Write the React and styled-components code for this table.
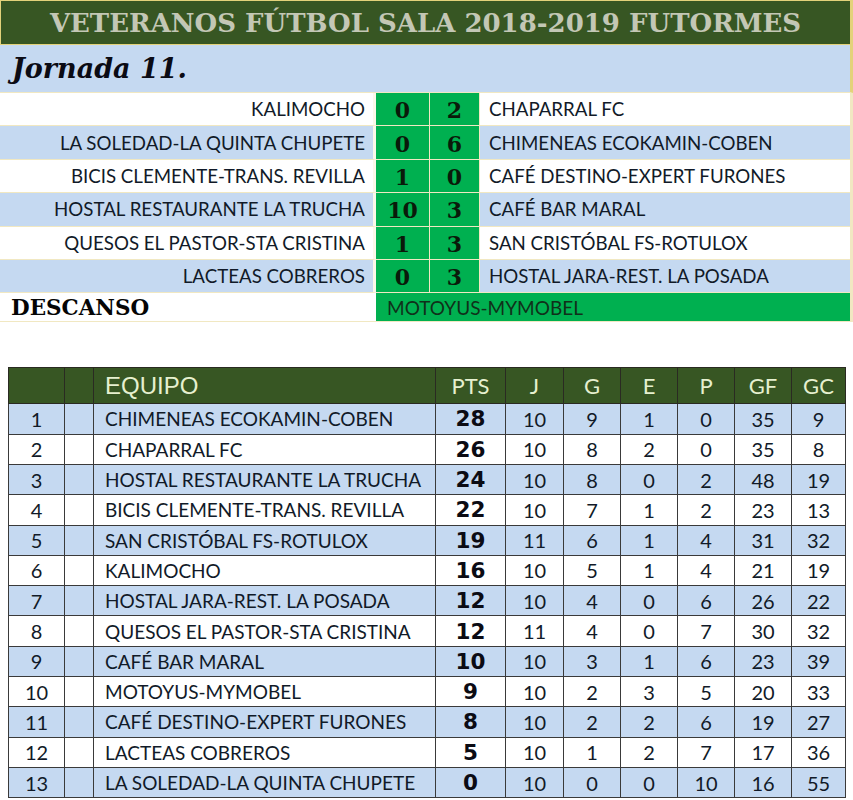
import React from "react";
import styled, { createGlobalStyle } from "styled-components";

const Global = createGlobalStyle`
  html, body { margin: 0; padding: 0; background: #ffffff; }
  body { font-family: Lato, "Liberation Sans", sans-serif; }
`;

const GREEN_DARK = "#375623";
const BLUE = "#c5d9f1";
const SCORE_GREEN = "#00b050";
const LINE = "#f1e8c2";
const INK = "#111a28";

const Page = styled.div`
  width: 853px;
  height: 800px;
  overflow: hidden;
  display: flex;
  flex-direction: column;
`;

const TitleBar = styled.div`
  height: 45px;
  box-sizing: border-box;
  background: ${GREEN_DARK};
  border: 1px solid #e3d27a;
  border-right-width: 3px;
  display: flex;
  align-items: center;
  justify-content: center;
  font-family: "DejaVu Serif", "Liberation Serif", serif;
  font-weight: 700;
  font-size: 26px;
  color: #c3c7b5;
`;

const JornadaBar = styled.div`
  height: 48px;
  box-sizing: border-box;
  background: ${BLUE};
  border-right: 3px solid #e3d27a;
  border-bottom: 1px solid ${LINE};
  display: flex;
  align-items: center;
  padding-left: 12px;
  font-family: "DejaVu Serif", "Liberation Serif", serif;
  font-weight: 700;
  font-style: italic;
  font-size: 27px;
  color: #0b0b14;
`;

const MatchGrid = styled.div`
  display: grid;
  grid-template-columns: 376px 54px 50px 1fr;
  grid-auto-rows: 33.4px;
`;

const TeamCell = styled.div`
  box-sizing: border-box;
  background: ${(p) => (p.$alt ? BLUE : "#ffffff")};
  border-bottom: 1px solid ${LINE};
  border-right: ${(p) => (p.$side === "left" ? `3px solid #fbf8ea` : `3px solid ${LINE}`)};
  display: flex;
  align-items: center;
  justify-content: ${(p) => (p.$side === "left" ? "flex-end" : "flex-start")};
  padding: ${(p) => (p.$side === "left" ? "0 8px 0 0" : "0 0 0 9px")};
  font-size: 18.7px;
  color: ${INK};
  white-space: nowrap;
`;

const ScoreCell = styled.div`
  box-sizing: border-box;
  background: ${SCORE_GREEN};
  border-bottom: 1px solid ${LINE};
  border-right: 1px solid ${LINE};
  display: flex;
  align-items: center;
  justify-content: center;
  font-family: "DejaVu Serif", "Liberation Serif", serif;
  font-weight: 700;
  font-size: 22px;
  color: #0a1a0a;
  padding-top: 2px;
`;

const RestRow = styled.div`
  display: grid;
  grid-template-columns: 376px 1fr;
  height: 29px;
`;

const RestLabel = styled.div`
  box-sizing: border-box;
  background: #ffffff;
  border-bottom: 1px solid ${LINE};
  display: flex;
  align-items: center;
  padding-left: 11px;
  font-family: "DejaVu Serif", "Liberation Serif", serif;
  font-weight: 700;
  font-size: 21.5px;
  color: #050505;
`;

const RestTeam = styled.div`
  box-sizing: border-box;
  background: ${SCORE_GREEN};
  border-bottom: 1px solid ${LINE};
  border-right: 3px solid ${LINE};
  display: flex;
  align-items: center;
  padding-left: 11px;
  font-size: 19px;
  color: #10301a;
`;

const TableWrap = styled.div`
  padding: 45px 0 0 8px;
`;

const Table = styled.table`
  border-collapse: collapse;
  table-layout: fixed;
  width: 837px;
  color: ${INK};
`;

const HeadRow = styled.tr`
  height: 36px;
  background: ${GREEN_DARK};
`;

const Th = styled.th`
  border: 1px solid #2a2a22;
  padding: 0;
  font-weight: 400;
  color: #e6f0cf;
  text-align: ${(p) => (p.$left ? "left" : "center")};
  padding-left: ${(p) => (p.$left ? "11px" : "0")};
  font-family: ${(p) => (p.$arial ? `"Liberation Sans", Arial, sans-serif` : `Lato, sans-serif`)};
  font-size: ${(p) => (p.$arial ? "24px" : "22px")};
`;

const Row = styled.tr`
  height: 30.3px;
  background: ${(p) => (p.$alt ? BLUE : "#ffffff")};
`;

const Td = styled.td`
  border: 1px solid #3a3a3a;
  padding: 0;
  font-size: 20px;
  text-align: ${(p) => (p.$left ? "left" : "center")};
  padding-left: ${(p) => (p.$left ? "11px" : "0")};
  white-space: nowrap;
  overflow: hidden;
`;

const TeamTd = styled(Td)`
  font-size: 19px;
`;

const PtsTd = styled(Td)`
  font-family: "DejaVu Sans", Verdana, sans-serif;
  font-weight: 700;
  font-size: 21.5px;
  color: #0b0b14;
`;

const matches = [
  ["KALIMOCHO", 0, 2, "CHAPARRAL FC"],
  ["LA SOLEDAD-LA QUINTA CHUPETE", 0, 6, "CHIMENEAS ECOKAMIN-COBEN"],
  ["BICIS CLEMENTE-TRANS. REVILLA", 1, 0, "CAFÉ DESTINO-EXPERT FURONES"],
  ["HOSTAL RESTAURANTE LA TRUCHA", 10, 3, "CAFÉ BAR MARAL"],
  ["QUESOS EL PASTOR-STA CRISTINA", 1, 3, "SAN CRISTÓBAL FS-ROTULOX"],
  ["LACTEAS COBREROS", 0, 3, "HOSTAL JARA-REST. LA POSADA"],
];

const standings = [
  ["CHIMENEAS ECOKAMIN-COBEN", 28, 10, 9, 1, 0, 35, 9],
  ["CHAPARRAL FC", 26, 10, 8, 2, 0, 35, 8],
  ["HOSTAL RESTAURANTE LA TRUCHA", 24, 10, 8, 0, 2, 48, 19],
  ["BICIS CLEMENTE-TRANS. REVILLA", 22, 10, 7, 1, 2, 23, 13],
  ["SAN CRISTÓBAL FS-ROTULOX", 19, 11, 6, 1, 4, 31, 32],
  ["KALIMOCHO", 16, 10, 5, 1, 4, 21, 19],
  ["HOSTAL JARA-REST. LA POSADA", 12, 10, 4, 0, 6, 26, 22],
  ["QUESOS EL PASTOR-STA CRISTINA", 12, 11, 4, 0, 7, 30, 32],
  ["CAFÉ BAR MARAL", 10, 10, 3, 1, 6, 23, 39],
  ["MOTOYUS-MYMOBEL", 9, 10, 2, 3, 5, 20, 33],
  ["CAFÉ DESTINO-EXPERT FURONES", 8, 10, 2, 2, 6, 19, 27],
  ["LACTEAS COBREROS", 5, 10, 1, 2, 7, 17, 36],
  ["LA SOLEDAD-LA QUINTA CHUPETE", 0, 10, 0, 0, 10, 16, 55],
];

const widths = [56, 29, 342, 70, 58, 57, 57, 57, 57, 54];

export default function App() {
  return (
    <Page>
      <Global />
      <TitleBar>VETERANOS FÚTBOL SALA 2018-2019 FUTORMES</TitleBar>
      <JornadaBar>Jornada 11.</JornadaBar>
      <MatchGrid>
        {matches.map(([home, hs, as, away], i) => (
          <React.Fragment key={home}>
            <TeamCell $side="left" $alt={i % 2 === 1}>{home}</TeamCell>
            <ScoreCell>{hs}</ScoreCell>
            <ScoreCell>{as}</ScoreCell>
            <TeamCell $side="right" $alt={i % 2 === 1}>{away}</TeamCell>
          </React.Fragment>
        ))}
      </MatchGrid>
      <RestRow>
        <RestLabel>DESCANSO</RestLabel>
        <RestTeam>MOTOYUS-MYMOBEL</RestTeam>
      </RestRow>
      <TableWrap>
        <Table>
          <colgroup>
            {widths.map((w, i) => (
              <col key={i} style={{ width: w }} />
            ))}
          </colgroup>
          <thead>
            <HeadRow>
              <Th />
              <Th />
              <Th $left $arial>EQUIPO</Th>
              <Th>PTS</Th>
              <Th>J</Th>
              <Th>G</Th>
              <Th>E</Th>
              <Th>P</Th>
              <Th>GF</Th>
              <Th>GC</Th>
            </HeadRow>
          </thead>
          <tbody>
            {standings.map(([team, pts, j, g, e, p, gf, gc], i) => (
              <Row key={team} $alt={i % 2 === 0}>
                <Td>{i + 1}</Td>
                <Td />
                <TeamTd $left>{team}</TeamTd>
                <PtsTd>{pts}</PtsTd>
                <Td>{j}</Td>
                <Td>{g}</Td>
                <Td>{e}</Td>
                <Td>{p}</Td>
                <Td>{gf}</Td>
                <Td>{gc}</Td>
              </Row>
            ))}
          </tbody>
        </Table>
      </TableWrap>
    </Page>
  );
}
